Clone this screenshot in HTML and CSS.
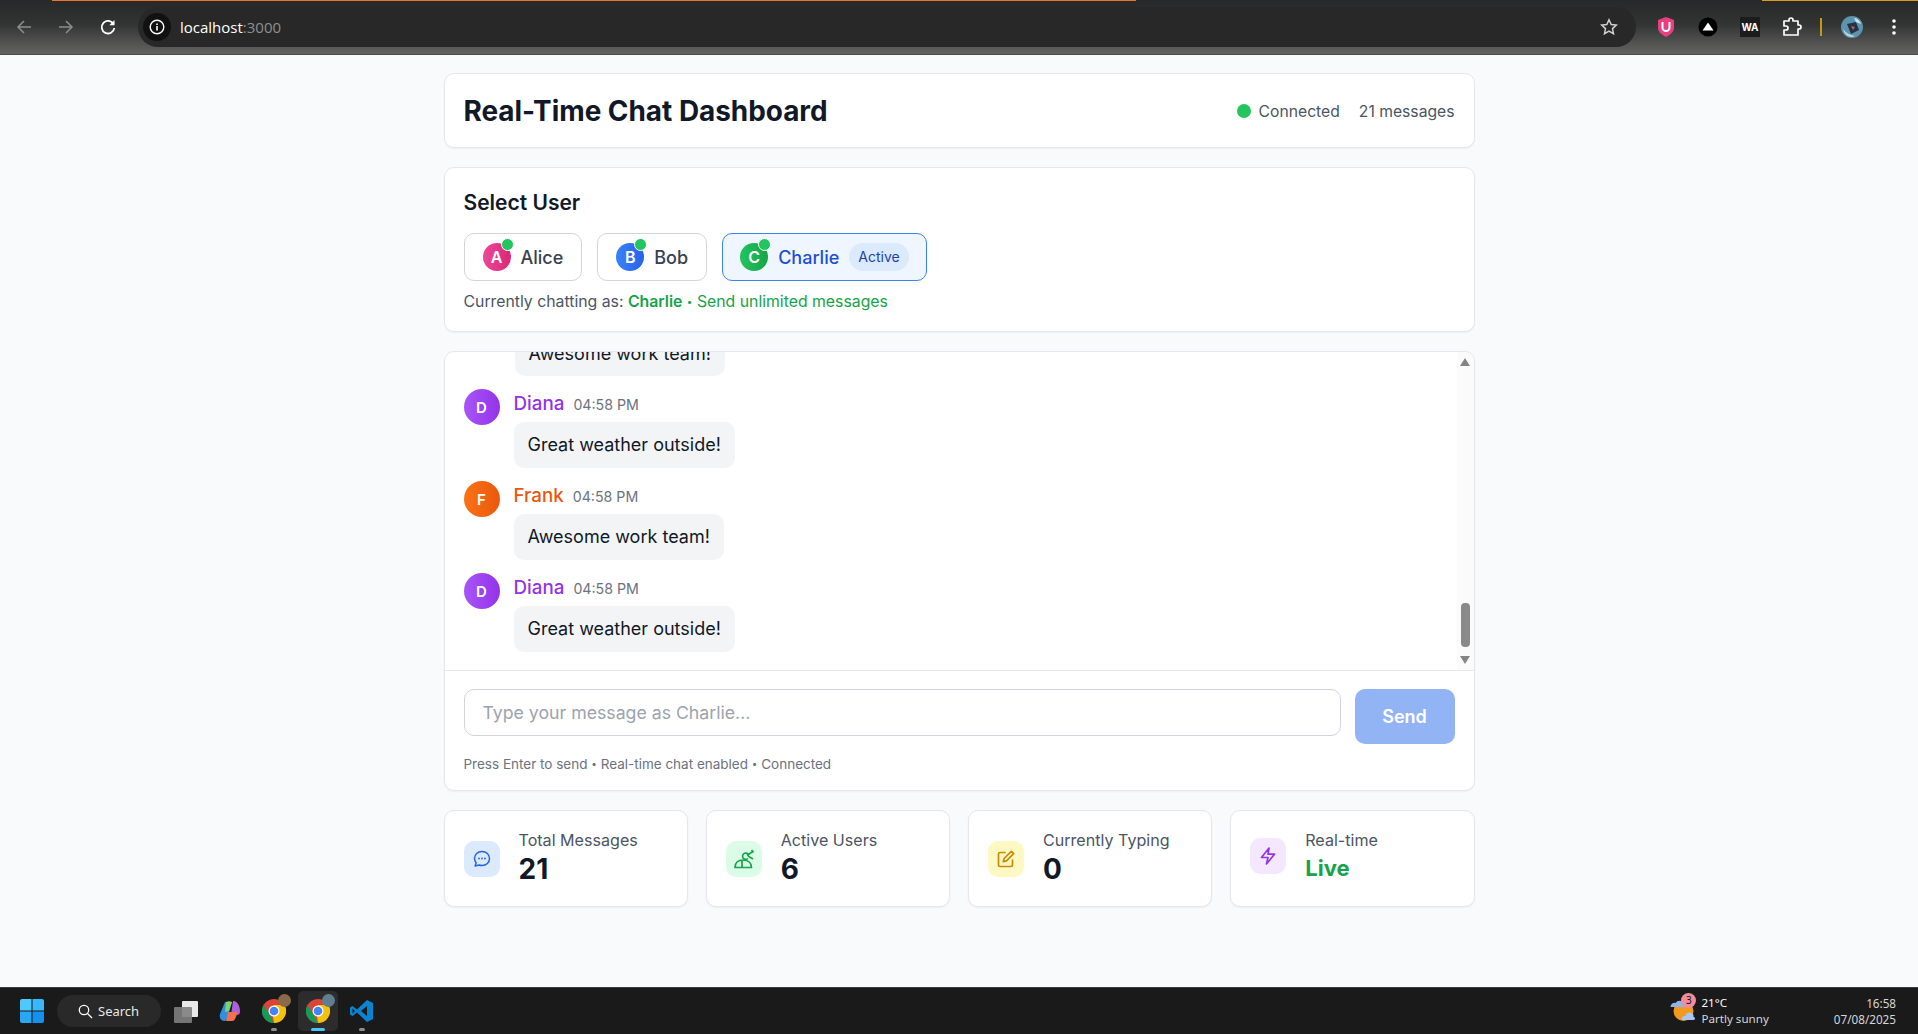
FILE: index.html
```html
<!DOCTYPE html>
<html lang="en">
<head>
    <meta charset="UTF-8">
    <title>Real-Time Chat Dashboard</title>
    <link rel="stylesheet" href="styles.css">
</head>
<body>
    <!-- browser toolbar -->
    <div class="toolbar">
        <div class="nav-btn dim"><svg width="18" height="18" viewBox="0 0 18 18"><path d="M16 9H3M9 3L3 9l6 6" fill="none" stroke="currentColor" stroke-width="1.5"/></svg></div>
        <div class="nav-btn dim"><svg width="18" height="18" viewBox="0 0 18 18"><path d="M2 9h13M9 3l6 6-6 6" fill="none" stroke="currentColor" stroke-width="1.5"/></svg></div>
        <div class="nav-btn"><svg width="18" height="18" viewBox="0 0 18 18"><path d="M14.6 6.2A6.3 6.3 0 1 0 15.3 10" fill="none" stroke="currentColor" stroke-width="1.8"/><path d="M15.5 2v5.2h-5.2z" fill="currentColor"/></svg></div>
        <div class="omnibox">
            <span class="site-chip"><svg width="16" height="16" viewBox="0 0 16 16"><circle cx="8" cy="8" r="6.8" fill="none" stroke="#fff" stroke-width="1.4"/><path d="M8 7v4.4M8 4.4v1.5" stroke="#fff" stroke-width="1.6"/></svg></span>
            <span class="url">localhost<span class="url-port">:3000</span></span>
            <svg class="star" width="18" height="18" viewBox="0 0 18 18"><path d="M9 1.8l2.2 4.7 5.1.6-3.8 3.5 1 5.1L9 13.2l-4.5 2.5 1-5.1L1.700 7.100l5.100-.6z" fill="none" stroke="#d0d0d0" stroke-width="1.500"/></svg>
        </div>
        <div class="ext-row">
            <svg width="20" height="22" viewBox="0 0 20 22"><path d="M10 1l8 3v8c0 4-4 7-8 9-4-2-8-5-8-9V4z" fill="#e8407f"/><path d="M6.500 6v5.500a3.500 3.500 0 0 0 7 0V6" fill="none" stroke="#fff" stroke-width="2"/></svg>
            <svg width="20" height="20" viewBox="0 0 20 20"><circle cx="10" cy="10" r="9.500" fill="#000"/><path d="M10 5.500l5.500 8h-11z" fill="#fff"/></svg>
            <span class="ext-wa">WA</span>
            <svg width="20" height="20" viewBox="0 0 20 20"><path d="M2 4h5V3a2 2 0 0 1 4 0v1h5v4h1a2 2 0 0 1 0 4h-1v6H2v-5h2a2 2 0 0 0 0-4H2z" fill="none" stroke="#fff" stroke-width="1.700" stroke-linejoin="round"/></svg>
            <span class="ext-sep"></span>
            <span class="profile"><svg width="22" height="22" viewBox="0 0 22 22"><circle cx="11" cy="11" r="11" fill="#5c93ad"/><path d="M6 8l9-2 3 8-8 4z" fill="#27324a"/><path d="M2 13c3 4 7 6 12 7-4 2-10 1-12-7z" fill="#b9d5df"/><path d="M13 2c3 0 6 3 7 6l-5-2z" fill="#cfe3ea"/><path d="M10 10l4 1-2 3z" fill="#b06a50"/></svg></span>
            <svg class="kebab" width="6" height="18" viewBox="0 0 6 18"><circle cx="3" cy="3" r="1.800" fill="#fff"/><circle cx="3" cy="9" r="1.800" fill="#fff"/><circle cx="3" cy="15" r="1.800" fill="#fff"/></svg>
        </div>
    </div>

    <main class="page">
        <div class="wrap">
            <header class="card top-card">
                <h1>Real-Time Chat Dashboard</h1>
                <div class="top-status">
                    <span class="status-dot"></span>
                    <span>Connected</span>
                    <span class="msg-count">21 messages</span>
                </div>
            </header>

            <section class="card user-card">
                <h2>Select User</h2>
                <div class="user-list">
                    <button class="user-btn">
                        <span class="avatar small pink">A<i class="online"></i></span>Alice
                    </button>
                    <button class="user-btn">
                        <span class="avatar small blue">B<i class="online"></i></span>Bob
                    </button>
                    <button class="user-btn selected">
                        <span class="avatar small green">C<i class="online"></i></span>Charlie<span class="active-tag">Active</span>
                    </button>
                </div>
                <p class="chat-as">Currently chatting as: <b>Charlie</b><span class="unlimited"> <span class="bullet">•</span> Send unlimited messages</span></p>
            </section>

            <section class="card chat-card">
                <div class="chat-body">
                    <div class="messages">
                        <div class="msg">
                            <span class="avatar purple">D</span>
                            <div>
                                <div class="msg-head"><span class="msg-name c-diana">Diana</span><span class="msg-time">04:58 PM</span></div>
                                <div class="bubble">Great weather outside!</div>
                            </div>
                        </div>
                        <div class="msg">
                            <span class="avatar orange">F</span>
                            <div>
                                <div class="msg-head"><span class="msg-name c-frank">Frank</span><span class="msg-time">04:58 PM</span></div>
                                <div class="bubble">Awesome work team!</div>
                            </div>
                        </div>
                        <div class="msg">
                            <span class="avatar purple">D</span>
                            <div>
                                <div class="msg-head"><span class="msg-name c-diana">Diana</span><span class="msg-time">04:58 PM</span></div>
                                <div class="bubble">Great weather outside!</div>
                            </div>
                        </div>
                    </div>
                    <div class="scrollbar">
                        <i class="arrow-up"></i>
                        <i class="thumb"></i>
                        <i class="arrow-down"></i>
                    </div>
                    <div class="cut-bubble"><span>Awesome work team!</span></div>
                </div>
                <div class="composer">
                    <div class="composer-row">
                        <input class="msg-input" type="text" placeholder="Type your message as Charlie...">
                        <button class="send-btn">Send</button>
                    </div>
                    <p class="hint">Press Enter to send <span class="bullet">•</span> Real-time chat enabled <span class="bullet">•</span> Connected</p>
                </div>
            </section>

            <section class="stats">
                <div class="card stat">
                    <span class="stat-icon bg-blue"><svg width="20" height="20" viewBox="0 0 20 20"><path d="M10 2.500c4.400 0 7.500 3 7.500 7s-3.100 7-7.500 7c-1 0-2-.2-2.900-.5l-3.900 1 .9-3.300A6.800 6.800 0 0 1 2.500 9.500c0-4 3.100-7 7.500-7z" fill="none" stroke="#2563eb" stroke-width="1.500" stroke-linejoin="round"/><circle cx="7" cy="9.500" r=".9" fill="#2563eb"/><circle cx="10" cy="9.500" r=".9" fill="#2563eb"/><circle cx="13" cy="9.500" r=".9" fill="#2563eb"/></svg></span>
                    <div>
                        <div class="stat-label">Total Messages</div>
                        <div class="stat-value">21</div>
                    </div>
                </div>
                <div class="card stat">
                    <span class="stat-icon bg-green"><svg width="22" height="22" viewBox="0 0 22 22"><path d="M2 19.500c0-5 3.500-7.500 8-7.500s8.500 2.500 8.500 7.500zM9 12v7.500" fill="none" stroke="#16a34a" stroke-width="1.700" stroke-linejoin="round"/><path d="M15.500 6.500a3.200 3.200 0 1 0-.5 4" fill="none" stroke="#16a34a" stroke-width="1.700"/><path d="M14 7.500l6.500-4.500M15 8l5 3M18.500 2l2 2.500" fill="none" stroke="#16a34a" stroke-width="1.700"/></svg></span>
                    <div>
                        <div class="stat-label">Active Users</div>
                        <div class="stat-value">6</div>
                    </div>
                </div>
                <div class="card stat">
                    <span class="stat-icon bg-yellow"><svg width="20" height="20" viewBox="0 0 20 20"><path d="M9 3.500H4a1.500 1.500 0 0 0-1.500 1.500v11A1.500 1.500 0 0 0 4 17.500h11a1.500 1.500 0 0 0 1.500-1.500v-5" fill="none" stroke="#ca8a04" stroke-width="1.700" stroke-linecap="round"/><path d="M15.300 2.300l2.400 2.400-7.200 7.200-3.200.8.800-3.200z" fill="none" stroke="#ca8a04" stroke-width="1.700" stroke-linejoin="round"/></svg></span>
                    <div>
                        <div class="stat-label">Currently Typing</div>
                        <div class="stat-value">0</div>
                    </div>
                </div>
                <div class="card stat">
                    <span class="stat-icon bg-purple"><svg width="20" height="20" viewBox="0 0 20 20"><path d="M11 2L3.500 11.500H10L8.500 18l8-9.800h-6.500z" fill="none" stroke="#9333ea" stroke-width="1.700" stroke-linejoin="round"/></svg></span>
                    <div>
                        <div class="stat-label">Real-time</div>
                        <div class="stat-live">Live</div>
                    </div>
                </div>
            </section>
        </div>
    </main>

    <!-- windows taskbar -->
    <footer class="taskbar">
        <svg class="win-logo" width="24" height="24" viewBox="0 0 24 24"><path d="M0 2a2 2 0 0 1 2-2h9.500v11.500H0z" fill="#4fc8fb"/><path d="M12.500 0H22a2 2 0 0 1 2 2v9.500H12.500z" fill="#36b8fa"/><path d="M0 12.500h11.500V24H2a2 2 0 0 1-2-2z" fill="#2aa6f2"/><path d="M12.500 12.500H24V22a2 2 0 0 1-2 2h-9.500z" fill="#1590ee"/></svg>
        <div class="search-pill">
            <svg width="15" height="15" viewBox="0 0 15 15"><circle cx="6" cy="6" r="4.700" fill="none" stroke="#fff" stroke-width="1.300"/><path d="M9.500 9.500l4.500 4.500" stroke="#fff" stroke-width="1.300"/></svg>
            Search
        </div>
        <div class="task-icons">
            <span class="task-icon"><svg width="24" height="24" viewBox="0 0 24 24"><rect x="8" y="2" width="16" height="16" rx="1" fill="#e8e8e8"/><rect x="0" y="8" width="18" height="16" rx="1" fill="#7f7f7f" fill-opacity=".9"/></svg></span>
            <span class="task-icon"><svg width="24" height="24" viewBox="0 0 24 24"><path d="M7 3h7l-5 17c-.5 1.500-2 2-3 2-3 0-5-3-4-7z" fill="#2f8fe0"/><path d="M8 3c2-1 4-1 6 0l-3 9-4 1z" fill="#7ed36b"/><path d="M15 2c3 0 5 2 6 5 2 6 1 9-2 9h-6z" fill="#b05fdb"/><path d="M10 13h10l-3 7c-1 2-2 2-4 2H8z" fill="#f1704f"/></svg></span>
            <span class="task-icon has-dot"><svg width="24" height="24" viewBox="0 0 24 24"><circle cx="12" cy="12" r="12" fill="#db4437"/><path d="M12 24a12 12 0 0 0 10.400-18H12l-2 5z" fill="#f4c20d"/><path d="M1.600 6L7 15l5 9A12 12 0 0 1 1.600 6z" fill="#0f9d58"/><circle cx="12" cy="12" r="5.500" fill="#fff"/><circle cx="12" cy="12" r="4.300" fill="#4285f4"/></svg><i class="task-badge brown"></i></span>
            <span class="task-icon has-dot current"><svg width="24" height="24" viewBox="0 0 24 24"><circle cx="12" cy="12" r="12" fill="#db4437"/><path d="M12 24a12 12 0 0 0 10.400-18H12l-2 5z" fill="#f4c20d"/><path d="M1.600 6L7 15l5 9A12 12 0 0 1 1.600 6z" fill="#0f9d58"/><circle cx="12" cy="12" r="5.500" fill="#fff"/><circle cx="12" cy="12" r="4.300" fill="#4285f4"/></svg><i class="task-badge steel"></i></span>
            <span class="task-icon has-dot"><svg width="24" height="24" viewBox="0 0 24 24"><path d="M17 1l6 3v16l-6 3-10-9.500L2.500 17 0 15.500v-7L2.500 7 7 10.500z" fill="#0a84d0"/><path d="M17 7l-6 5 6 5z" fill="#1a1a1a"/><path d="M2.500 9.500v5L5 12z" fill="#1a1a1a"/></svg></span>
        </div>
        <div class="weather">
            <svg class="weather-icon" width="27" height="26" viewBox="0 0 26 26"><circle cx="13" cy="13" r="10" fill="#f09a1f"/><path d="M0 9a4 4 0 0 1 5-4 5 5 0 0 1 9 2c1 0 1 2 0 2z" fill="#8fb4ea"/><path d="M11 21a3.500 3.500 0 0 1 4-3 4 4 0 0 1 8 1c2 0 2 3 0 3H12z" fill="#a9c6f2"/></svg>
            <span class="weather-badge">3</span>
            <div class="weather-text">
                <div class="temp">21°C</div>
                <div class="sky">Partly sunny</div>
            </div>
        </div>
        <div class="clock">
            <div>16:58</div>
            <div>07/08/2025</div>
        </div>
    </footer>
</body>
</html>
```

FILE: styles.css
```css
* {
    box-sizing: border-box;
}

html, body {
    height: 100%;
}

body {
    margin: 0;
    display: flex;
    flex-direction: column;
    overflow: hidden;
    background: #f9fafb;
    color: #111827;
    font-family: Inter, "Noto Sans", sans-serif;
}

/* ---- browser toolbar ---- */
.toolbar {
    height: 55px;
    flex: none;
    display: flex;
    align-items: center;
    padding: 0 0 0 3px;
    position: relative;
    background: linear-gradient(180deg, #262829 0%, #323434 45%, #646462 100%);
    border-bottom: 1px solid #4a4a48;
    color: #fff;
}

.toolbar::before {
    content: "";
    position: absolute;
    left: 52px;
    top: 0;
    width: 1084px;
    height: 1px;
    background: #e8752a;
}

.toolbar::after {
    content: "";
    position: absolute;
    left: 1762px;
    top: 0;
    width: 156px;
    height: 1px;
    background: #d99a16;
}

.nav-btn {
    width: 42px;
    height: 42px;
    display: flex;
    align-items: center;
    justify-content: center;
}

.nav-btn.dim {
    color: #8b8d8d;
}

.omnibox {
    width: 1498px;
    height: 40px;
    margin-left: 9px;
    padding: 0 18px 0 5px;
    display: flex;
    align-items: center;
    border-radius: 20px;
    background: #282828;
}

.site-chip {
    width: 28px;
    height: 28px;
    border-radius: 50%;
    display: flex;
    align-items: center;
    justify-content: center;
    background: #111;
}

.url {
    margin-left: 9px;
    flex: 1;
    color: #fff;
    font-family: "Open Sans", sans-serif;
    font-size: 15px;
}

.url-port {
    color: #8f8f8f;
}

.ext-row {
    flex: 1;
    display: flex;
    align-items: center;
    gap: 22px;
    padding-left: 20px;
}

.ext-wa {
    width: 20px;
    height: 20px;
    background: #1c1c1c;
    color: #fff;
    font-size: 10px;
    font-weight: 700;
    line-height: 20px;
    text-align: center;
}

.ext-sep {
    width: 2px;
    height: 18px;
    margin: 0 -4px;
    background: #c49a10;
}

.profile {
    width: 22px;
    height: 22px;
    margin-left: 1px;
    display: block;
}

.kebab {
    margin-left: 6px;
}

/* ---- page ---- */
.page {
    flex: 1;
    min-height: 0;
    padding-top: 18px;
}

.wrap {
    width: 1031px;
    margin: 0 auto;
    display: flex;
    flex-direction: column;
    gap: 19px;
}

.card {
    background: #fff;
    border: 1px solid #e5e7eb;
    border-radius: 10px;
    box-shadow: 0 1px 2px rgba(0, 0, 0, 0.05);
}

.top-card {
    height: 75px;
    padding: 0 19px;
    display: flex;
    align-items: center;
    justify-content: space-between;
}

h1 {
    margin: 0;
    font-size: 27.9px;
    font-weight: 700;
}

.top-status {
    padding-top: 1px;
    display: flex;
    align-items: center;
    color: #4b5563;
    font-size: 15.7px;
}

.status-dot {
    width: 14px;
    height: 14px;
    margin-right: 8px;
    border-radius: 50%;
    background: #22c55e;
}

.msg-count {
    margin-left: 19px;
}

.user-card {
    height: 165px;
    padding: 22px 19px 0;
}

h2 {
    margin: 0 0 17px;
    font-size: 21px;
    line-height: 26px;
    font-weight: 600;
}

.user-list {
    display: flex;
    gap: 15px;
}

.user-btn {
    height: 48px;
    padding: 0 18px;
    display: flex;
    align-items: center;
    gap: 10px;
    background: #fff;
    border: 1px solid #d1d5db;
    border-radius: 10px;
    color: #374151;
    font-family: inherit;
    font-size: 18px;
    font-weight: 500;
}

.user-btn.selected {
    padding: 0 17px;
    background: #eff6ff;
    border-color: #3b82f6;
    color: #1d4ed8;
}

.avatar {
    position: relative;
    flex: none;
    width: 36px;
    height: 36px;
    display: flex;
    align-items: center;
    justify-content: center;
    border-radius: 50%;
    color: #fff;
    font-size: 15px;
    font-weight: 600;
}

.avatar.small {
    width: 28px;
    height: 28px;
    font-size: 16px;
}

.online {
    position: absolute;
    top: -5px;
    right: -3px;
    width: 13px;
    height: 13px;
    border-radius: 50%;
    background: #22c55e;
    border: 1px solid #fff;
}

.pink { background: linear-gradient(90deg, #ec4899, #db2777); }
.blue { background: linear-gradient(90deg, #3b82f6, #2563eb); }
.green { background: linear-gradient(90deg, #22c55e, #16a34a); }
.purple { background: linear-gradient(90deg, #a855f7, #9333ea); }
.orange { background: linear-gradient(90deg, #f97316, #ea580c); }

.active-tag {
    height: 28px;
    padding: 0 9px;
    margin-left: 0;
    border-radius: 14px;
    background: #dbeafe;
    color: #1e40af;
    font-size: 14px;
    font-weight: 400;
    line-height: 28px;
}

.chat-as {
    margin: 11px 0 0;
    color: #4b5563;
    font-size: 15.8px;
}

.chat-as b {
    color: #16a34a;
    font-weight: 600;
}

.unlimited {
    color: #16a34a;
}

.bullet {
    font-size: 10px;
    vertical-align: 2px;
}

/* ---- chat ---- */
.chat-card {
    height: 440px;
    overflow: hidden;
}

.chat-body {
    position: relative;
    height: 319px;
    display: flex;
    border-bottom: 1px solid #e5e7eb;
}

/* last bit of the message scrolled off the top */
.cut-bubble {
    position: absolute;
    left: 70px;
    top: 0;
    height: 24px;
    padding: 0 14px;
    overflow: hidden;
    border-radius: 0 0 10px 10px;
    background: #f3f4f6;
    font-size: 18px;
    line-height: 46px;
}

.cut-bubble span {
    display: block;
    margin-top: -21px;
}

.messages {
    flex: 1;
    overflow: hidden;
    display: flex;
    flex-direction: column;
    justify-content: flex-end;
    gap: 13px;
    padding: 0 19px 18px;
}

.msg {
    flex: none;
    display: flex;
    gap: 14px;
}

.msg-head {
    height: 33px;
    display: flex;
    align-items: baseline;
    gap: 9px;
}

.msg-name {
    font-size: 18.8px;
    font-weight: 500;
    line-height: 30px;
}

.c-diana { color: #9333ea; }
.c-frank { color: #ea580c; }

.msg-time {
    color: #6b7280;
    font-size: 14.2px;
}

.bubble {
    width: fit-content;
    height: 46px;
    padding: 0 14px;
    border-radius: 10px;
    background: #f3f4f6;
    font-size: 18px;
    line-height: 46px;
}

.scrollbar {
    flex: none;
    width: 17px;
    padding: 6px 0 6px;
    display: flex;
    flex-direction: column;
    align-items: center;
    background: #fbfbfb;
}

.arrow-up,
.arrow-down {
    width: 0;
    height: 0;
    border-left: 5.5px solid transparent;
    border-right: 5.5px solid transparent;
}

.arrow-up {
    border-bottom: 8px solid #858585;
}

.arrow-down {
    border-top: 8px solid #858585;
    margin-top: 9px;
}

.thumb {
    width: 9px;
    height: 44px;
    margin-top: auto;
    border-radius: 4px;
    background: #8a8a8a;
}

.composer {
    padding: 18px 19px 0;
}

.composer-row {
    display: flex;
    align-items: flex-start;
    gap: 14px;
}

.msg-input {
    flex: 1;
    height: 47px;
    padding: 0 18px;
    border: 1px solid #d1d5db;
    border-radius: 10px;
    font-family: inherit;
    font-size: 17.7px;
    background: #fff;
}

.msg-input::placeholder {
    color: #9ca3af;
}

.send-btn {
    width: 100px;
    height: 55px;
    border: none;
    border-radius: 10px;
    background: #93b4f4;
    color: #fff;
    font-family: inherit;
    font-size: 18px;
    font-weight: 600;
}

.hint {
    margin: 9px 0 0;
    color: #6b7280;
    font-size: 13.5px;
    line-height: 20px;
}

/* ---- stats ---- */
.stats {
    display: grid;
    grid-template-columns: repeat(4, 1fr);
    gap: 18px;
}

.stat {
    height: 97px;
    padding: 19px;
    display: flex;
    align-items: flex-start;
    gap: 19px;
}

.stat-icon {
    flex: none;
    width: 36px;
    height: 36px;
    margin-top: 11px;
    display: flex;
    align-items: center;
    justify-content: center;
    border-radius: 10px;
}

.stat:last-child .stat-icon {
    margin-top: 8px;
}

.bg-blue { background: #dbeafe; }
.bg-green { background: #dcfce7; }
.bg-yellow { background: #fef9c3; }
.bg-purple { background: #f3e8ff; }

.stat-label {
    color: #4b5563;
    font-size: 16.1px;
    line-height: 20px;
}

.stat-value {
    margin-top: 2px;
    font-size: 28px;
    font-weight: 700;
    line-height: 35px;
}

.stat-live {
    margin-top: 3px;
    color: #16a34a;
    font-size: 22px;
    font-weight: 700;
    line-height: 30px;
}

/* ---- taskbar ---- */
.taskbar {
    height: 47px;
    flex: none;
    padding: 0 22px 0 20px;
    display: flex;
    align-items: center;
    background: #1a1a1a;
    border-top: 1px solid #3c3c3c;
    color: #fff;
    font-family: "Noto Sans", sans-serif;
    font-size: 12px;
}

.search-pill {
    width: 104px;
    height: 32px;
    margin-left: 13px;
    padding-left: 21px;
    display: flex;
    align-items: center;
    gap: 5px;
    border-radius: 16px;
    background: #292929;
    font-size: 13px;
    color: #e8e8e8;
}

.task-icons {
    display: flex;
    margin-left: 5px;
    flex: 1;
}

.task-icon {
    position: relative;
    width: 40px;
    height: 40px;
    margin-right: 4px;
    display: flex;
    align-items: center;
    justify-content: center;
    border-radius: 5px;
}

.task-icon.current {
    background: #2c2c2c;
}

.task-icon.has-dot::after {
    content: "";
    position: absolute;
    bottom: 0;
    left: 17px;
    width: 6px;
    height: 3px;
    border-radius: 2px;
    background: #8f8f8f;
}

.task-icon.current::after {
    left: 13px;
    width: 14px;
    background: #4cc2ff;
}

.task-badge {
    position: absolute;
    top: 3px;
    right: 3px;
    width: 13px;
    height: 13px;
    border-radius: 50%;
}

.brown { background: #8a6a4a; }
.steel { background: #5f7f90; }

.weather {
    position: relative;
    display: flex;
    align-items: center;
    gap: 4px;
    margin-right: 65px;
}

.weather-badge {
    position: absolute;
    left: 11px;
    top: -2px;
    width: 15px;
    height: 15px;
    border-radius: 50%;
    background: #f28b9b;
    color: #111;
    font-size: 10px;
    line-height: 15px;
    text-align: center;
}

.temp {
    line-height: 16px;
    font-size: 11.600px;
}

.sky {
    line-height: 16px;
    font-size: 11.600px;
    color: #d6d6d6;
}

.clock {
    text-align: right;
    color: #d6d6d6;
    font-size: 11.700px;
    line-height: 16px;
}
```
